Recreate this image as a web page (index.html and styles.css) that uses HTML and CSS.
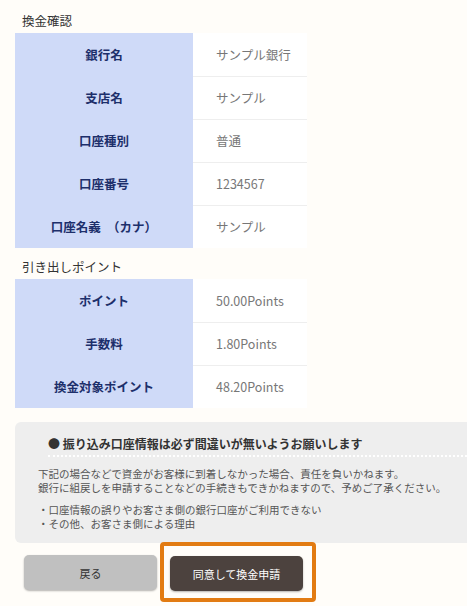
FILE: index.html
```html
<!DOCTYPE html>
<html lang="ja">
<head>
    <meta charset="UTF-8">
    <meta name="viewport" content="width=device-width, initial-scale=1.0">
    <title>換金確認</title>
    <link rel="stylesheet" href="styles.css">
</head>
<body>
    <div class="page">
        <h2 class="section-title">換金確認</h2>
        <table class="info">
            <tr><th>銀行名</th><td>サンプル銀行</td></tr>
            <tr><th>支店名</th><td>サンプル</td></tr>
            <tr><th>口座種別</th><td>普通</td></tr>
            <tr><th>口座番号</th><td>1234567</td></tr>
            <tr><th>口座名義　（カナ）</th><td>サンプル</td></tr>
        </table>

        <h2 class="section-title second">引き出しポイント</h2>
        <table class="info">
            <tr><th>ポイント</th><td>50.00Points</td></tr>
            <tr><th>手数料</th><td>1.80Points</td></tr>
            <tr><th>換金対象ポイント</th><td>48.20Points</td></tr>
        </table>

        <div class="notice">
            <h3 class="notice-title">● 振り込み口座情報は必ず間違いが無いようお願いします</h3>
            <p>下記の場合などで資金がお客様に到着しなかった場合、責任を負いかねます。<br>銀行に組戻しを申請することなどの手続きもできかねますので、予めご了承ください。</p>
            <p class="list">・口座情報の誤りやお客さま側の銀行口座がご利用できない<br>・その他、お客さま側による理由</p>
        </div>

        <div class="buttons">
            <button class="btn btn-back">戻る</button>
            <div class="highlight">
                <button class="btn btn-submit">同意して換金申請</button>
            </div>
        </div>
    </div>
</body>
</html>
```

FILE: styles.css
```css
body {
    margin: 0;
    background-color: #fffdf9;
    font-family: "Noto Sans CJK JP", "Noto Sans", sans-serif;
    color: #333;
}
.page {
    padding: 12px 0 0 15px;
    overflow: hidden;
}
.section-title {
    font-size: 12.5px;
    font-weight: normal;
    margin: 0 0 3px 7px;
    line-height: 18px;
    color: #333;
}
.section-title.second {
    margin-top: 10px;
}
.info {
    border-collapse: collapse;
    width: 292px;
}
.info th {
    width: 178px;
    height: 43px;
    padding: 0;
    background-color: #cfdaf8;
    color: #1d2f6b;
    font-size: 12.5px;
    font-weight: bold;
    text-align: center;
}
.info td {
    height: 42px;
    padding: 0 0 0 23px;
    color: #777;
    font-size: 12.5px;
    border-top: 1px solid #eeeeee;
    background-color: #fff;
}
.info tr:first-child td {
    border-top: none;
}
.notice {
    margin-top: 14px;
    margin-right: -20px;
    background-color: #eeeeee;
    border-radius: 6px;
    padding: 13px 0 12px 23px;
}
.notice-title {
    margin: 0 0 10px 10px;
    padding-bottom: 2px;
    font-size: 12px;
    font-weight: bold;
    color: #333;
    border-bottom: 2px dotted #fff;
    line-height: 18px;
}
.notice p {
    margin: 0;
    font-size: 10.5px;
    line-height: 14px;
    color: #555;
}
.notice p.list {
    margin-top: 8px;
}
.buttons {
    display: flex;
    align-items: center;
    gap: 3px;
    padding-left: 9px;
}
.btn {
    width: 133px;
    height: 35px;
    border: none;
    border-radius: 5px;
    font-family: "Noto Sans CJK JP", sans-serif;
    font-size: 11px;
    box-shadow: 0 1px 2px rgba(0,0,0,0.3);
}
.btn-back {
    background-color: #c0c0c0;
    color: #333;
}
.highlight {
    border: 4px solid #e27b12;
    border-radius: 4px;
    padding: 10px 9px 7px 6px;
    margin-top: -1px;
}
.btn-submit {
    background-color: #4c423e;
    color: #fff;
}
```
